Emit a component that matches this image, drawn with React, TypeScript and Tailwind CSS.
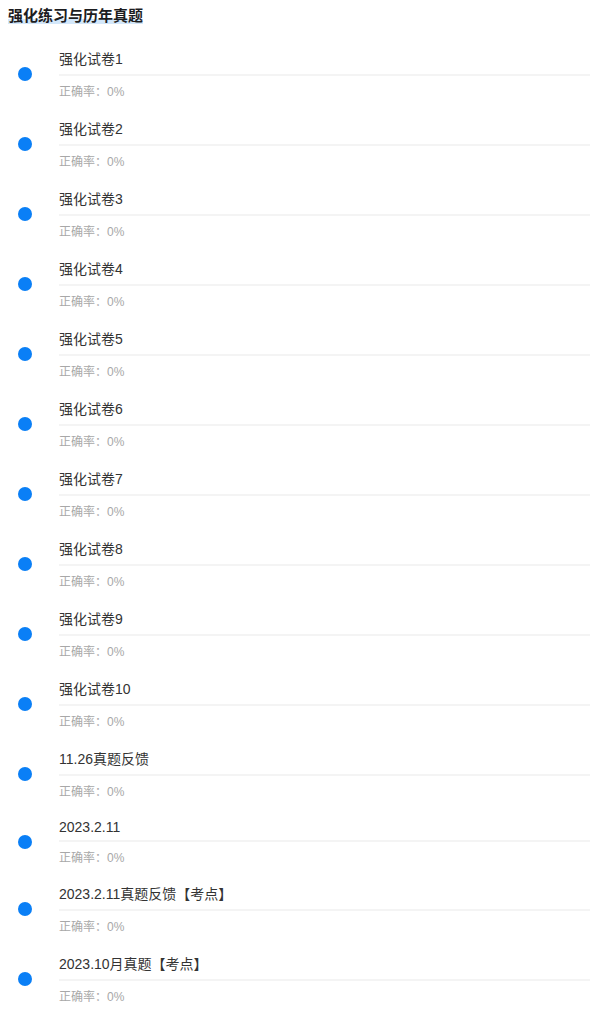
import React from "react";

const items: { t: string; lh: string }[] = [
  { t: "强化试卷1", lh: "leading-[16px]" },
  { t: "强化试卷2", lh: "leading-[16px]" },
  { t: "强化试卷3", lh: "leading-[16px]" },
  { t: "强化试卷4", lh: "leading-[16px]" },
  { t: "强化试卷5", lh: "leading-[16px]" },
  { t: "强化试卷6", lh: "leading-[16px]" },
  { t: "强化试卷7", lh: "leading-[16px]" },
  { t: "强化试卷8", lh: "leading-[16px]" },
  { t: "强化试卷9", lh: "leading-[16px]" },
  { t: "强化试卷10", lh: "leading-[16px]" },
  { t: "11.26真题反馈", lh: "leading-[16px]" },
  { t: "2023.2.11", lh: "leading-[12px]" },
  { t: "2023.2.11真题反馈【考点】", lh: "leading-[15px]" },
  { t: "2023.10月真题【考点】", lh: "leading-[16px]" },
];

export default function App() {
  return (
    <div
      className="w-[590px] min-h-[1020px] bg-white"
      style={{ fontFamily: '"Liberation Sans", Arial, "Noto Sans CJK SC", sans-serif' }}
    >
      <div className="pl-2 pt-[4px]">
        <span className="relative inline-block text-[15px] font-bold leading-[22px] text-[#1d1d1f]">
          <span className="absolute left-0 right-0 top-[14px] h-[5px] bg-[#d3e7fa]" />
          <span className="relative">强化练习与历年真题</span>
        </span>
      </div>
      <div className="mt-[23px] flex flex-col gap-[20px]">
        {items.map(({ t, lh }) => (
          <div key={t} className="flex items-center">
            <div className="mb-[5px] ml-[18px] mr-[27px] h-[14px] w-[14px] shrink-0 rounded-full bg-[#0a7ff6]" />
            <div className="flex flex-1 flex-col">
              <div className={`text-sm text-[#333333] ${lh}`}>{t}</div>
              <div className="mt-[7px] h-[2px] bg-[#f4f4f4]" />
              <div className="mt-[7px] text-xs leading-[18px] text-[#a8a8a8]">正确率：0%</div>
            </div>
          </div>
        ))}
      </div>
    </div>
  );
}
